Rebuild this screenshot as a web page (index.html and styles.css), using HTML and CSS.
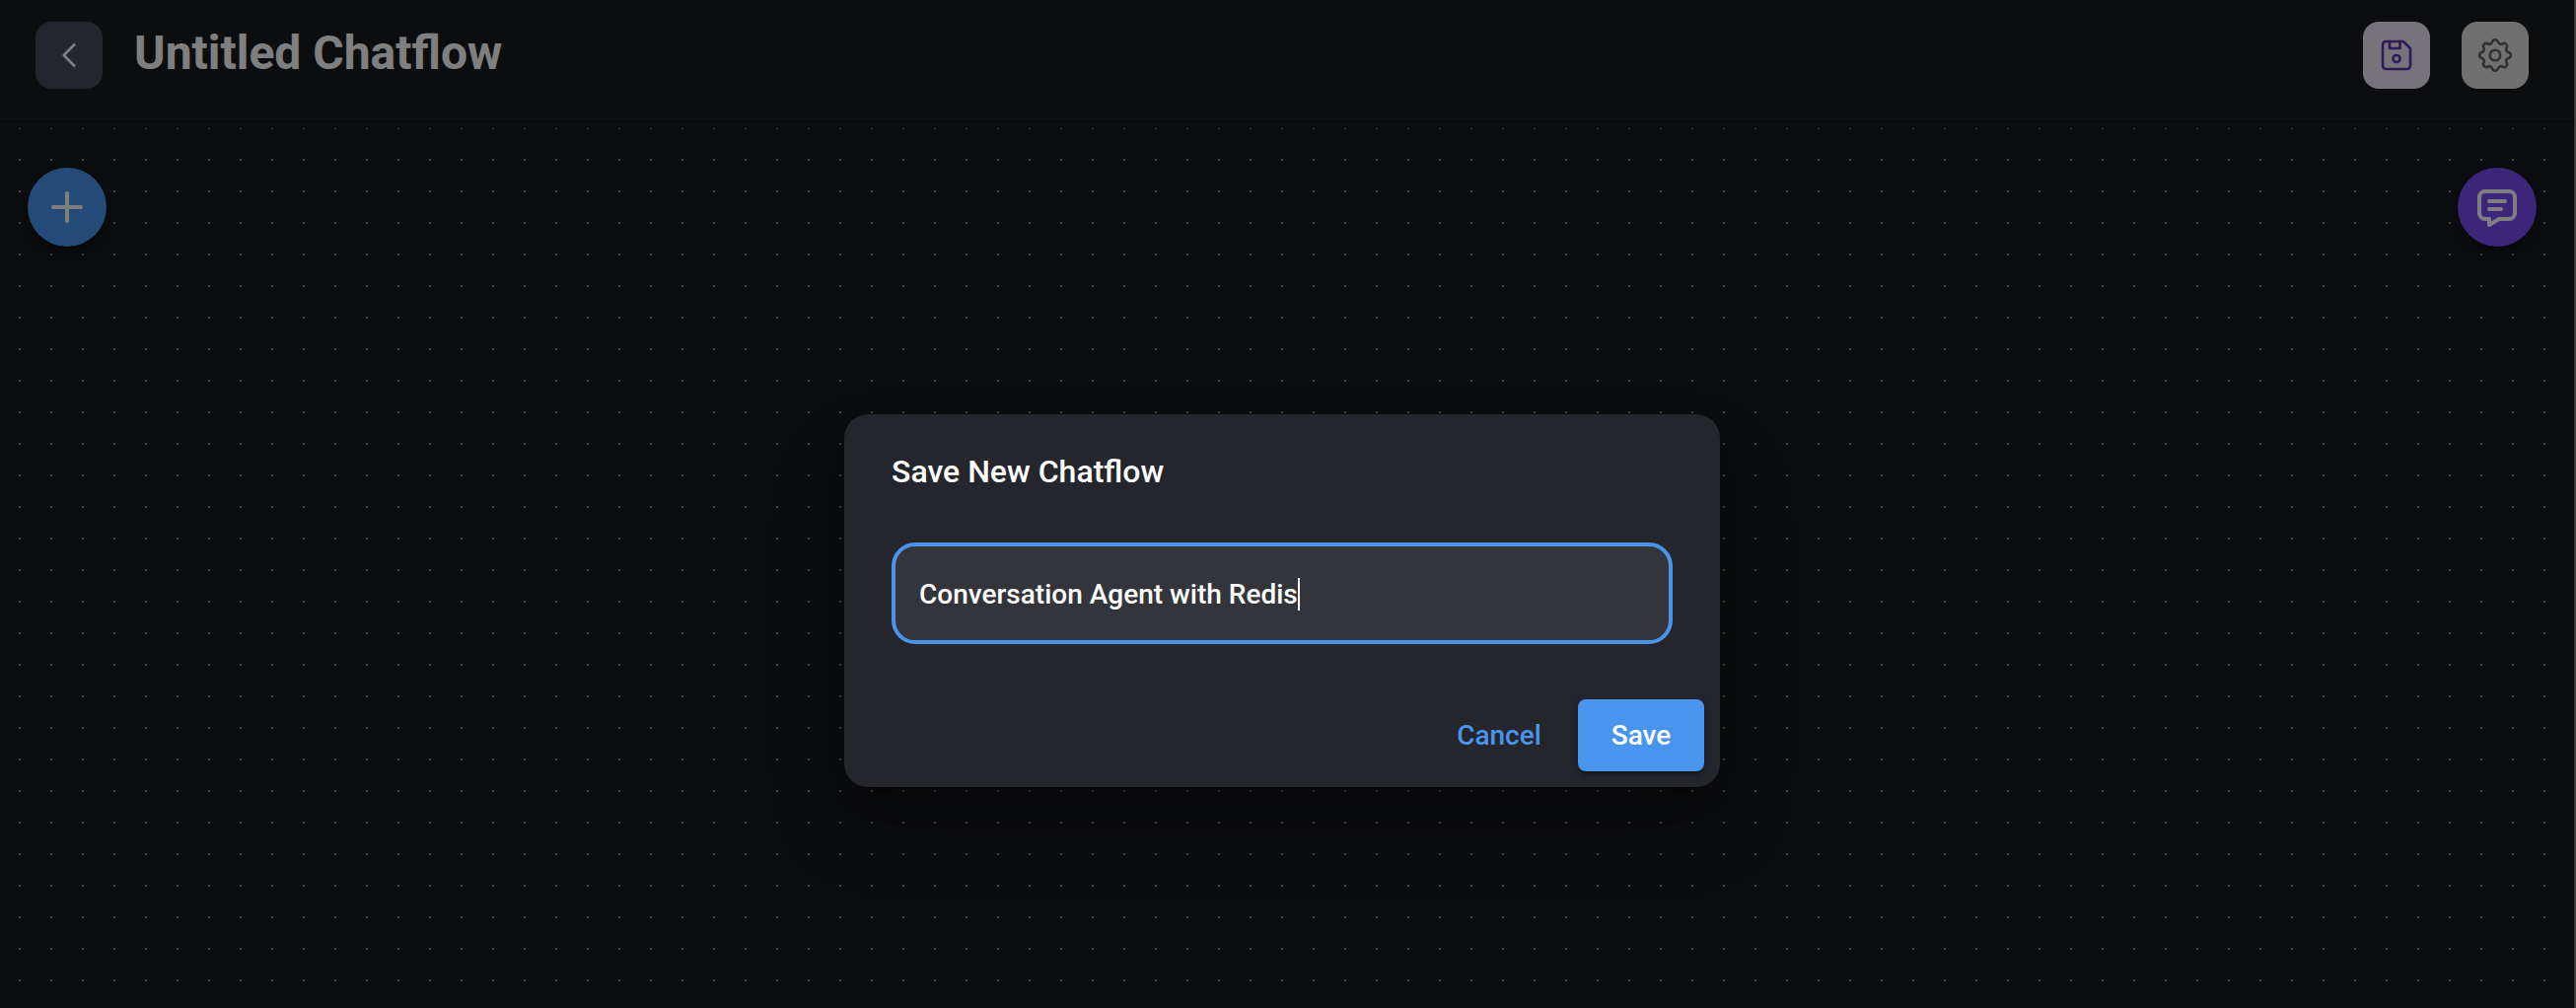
FILE: index.html
```html
<!DOCTYPE html>
<html lang="en">
<head>
<meta charset="utf-8">
<title>Untitled Chatflow</title>
<link rel="stylesheet" href="styles.css">
</head>
<body>
<div class="app">
  <header class="topbar">
    <button class="square back" aria-label="Back">
      <svg width="42" height="42" viewBox="0 0 24 24"><path d="M15 6l-6 6l6 6"/></svg>
    </button>
    <h1 class="title">Untitled Chatflow</h1>
    <button class="square save" aria-label="Save chatflow">
      <svg width="42" height="42" viewBox="0 0 24 24"><path d="M6 4h10l4 4v10a2 2 0 0 1 -2 2h-12a2 2 0 0 1 -2 -2v-12a2 2 0 0 1 2 -2"/><circle cx="12" cy="14" r="2"/><path d="M14 4v4h-6v-4"/></svg>
    </button>
    <button class="square settings" aria-label="Settings">
      <svg width="42" height="42" viewBox="0 0 24 24"><path d="M10.325 4.317c.426 -1.756 2.924 -1.756 3.35 0a1.724 1.724 0 0 0 2.573 1.066c1.543 -.94 3.31 .826 2.37 2.37a1.724 1.724 0 0 0 1.065 2.572c1.756 .426 1.756 2.924 0 3.35a1.724 1.724 0 0 0 -1.066 2.573c.94 1.543 -.826 3.31 -2.37 2.37a1.724 1.724 0 0 0 -2.572 1.065c-.426 1.756 -2.924 1.756 -3.35 0a1.724 1.724 0 0 0 -2.573 -1.066c-1.543 .94 -3.31 -.826 -2.37 -2.37a1.724 1.724 0 0 0 -1.065 -2.572c-1.756 -.426 -1.756 -2.924 0 -3.35a1.724 1.724 0 0 0 1.066 -2.573c-.94 -1.543 .826 -3.31 2.37 -2.37c1 .608 2.296 .07 2.572 -1.065z"/><circle cx="12" cy="12" r="3"/></svg>
    </button>
  </header>
  <main class="canvas">
    <button class="fab add" aria-label="Add node">
      <svg width="48" height="48" viewBox="0 0 24 24"><path d="M12 5v14M5 12h14"/></svg>
    </button>
    <button class="fab chat" aria-label="Open chat">
      <svg width="48" height="48" viewBox="0 0 24 24"><path d="M8 9h8M8 13h6M18 4a3 3 0 0 1 3 3v8a3 3 0 0 1 -3 3h-5l-5 3v-3h-2a3 3 0 0 1 -3 -3v-8a3 3 0 0 1 3 -3h12z"/></svg>
    </button>
  </main>
</div>
<div class="backdrop">
  <section class="dialog" role="dialog" aria-modal="true">
    <h2 class="dialog-title">Save New Chatflow</h2>
    <div class="field"><span>Conversation Agent with Redis</span><i class="caret"></i></div>
    <div class="actions">
      <button class="btn">Cancel</button>
      <button class="btn primary">Save</button>
    </div>
  </section>
</div>
</body>
</html>
```
FILE: styles.css
```css
* { box-sizing: border-box; }
body { margin: 0; height: 1022px; overflow: hidden; font-family: Roboto, "Liberation Sans", sans-serif; background: #191b1f; }
button { border: 0; padding: 0; font: inherit; }
svg { display: block; fill: none; stroke: currentColor; stroke-linecap: round; stroke-linejoin: round; }

.app { height: 1022px; display: flex; flex-direction: column; border-right: 2px solid #727272; }
.topbar { height: 124px; display: flex; align-items: flex-start; padding: 22px 46px 0 36px; border-bottom: 2px solid #121417; }
.square { width: 68px; height: 68px; border-radius: 16px; display: grid; place-items: center; }
.back { background: #484c5a; color: #fff; }
.back svg { stroke-width: 1.5; }
.title { margin: 0 auto 0 32px; font-size: 48px; font-weight: 700; line-height: 64px; color: #fff; }
.save { background: #ede7f6; color: #5e35b1; margin-right: 32px; }
.settings { background: #e0e0e0; color: #616161; }
.save svg, .settings svg { stroke-width: 1.5; }

.canvas { flex: 1; display: flex; justify-content: space-between; align-items: flex-start; padding: 46px 38px 0 28px;
  background: linear-gradient(#191b1f, #191b1f) 0 0 / 100% 6px no-repeat, conic-gradient(from 270deg at 2px 2px, #8f8f90 90deg, transparent 0) 19px 5px / 32px 32px; }
.fab { width: 80px; height: 80px; border-radius: 50%; display: grid; place-items: center; color: #fff;
  box-shadow: 0 6px 10px -2px rgba(0,0,0,.2), 0 12px 20px rgba(0,0,0,.14), 0 2px 36px rgba(0,0,0,.12); }
.fab svg { stroke-width: 2; }
.add { background: #4896ee; }
.chat { background: #764cf4; }

.backdrop { position: absolute; inset: 0; display: flex; justify-content: center; align-items: flex-start; padding: 420px 12px 0 0; background: rgba(0,0,0,.5); }
.dialog { width: 888px; height: 378px; border-radius: 24px; padding: 33px 16px 0 48px; background: #25262b; color: #fff;
  box-shadow: 0 22px 30px -14px rgba(0,0,0,.2), 0 48px 76px 6px rgba(0,0,0,.14), 0 18px 92px 16px rgba(0,0,0,.12); }
.dialog-title { margin: 0; font-size: 32px; font-weight: 500; line-height: 50px; }
.field { display: flex; align-items: center; width: 792px; height: 103px; margin-top: 47px; padding: 1px 0 0 24px; border: 4px solid #4994ec; border-radius: 24px; background: #34353a; font-size: 28px; font-weight: 500; }
.caret { width: 2px; height: 33px; background: #fff; }
.actions { display: flex; justify-content: flex-end; gap: 16px; margin-top: 56px; }
.btn { width: 128px; height: 73px; border-radius: 8px; font-size: 28px; font-weight: 500; background: none; color: #4994ec; }
.primary { background: #4994ec; color: #fff; box-shadow: 0 6px 2px -4px rgba(0,0,0,.2), 0 4px 4px rgba(0,0,0,.14), 0 2px 10px rgba(0,0,0,.12); }
```
